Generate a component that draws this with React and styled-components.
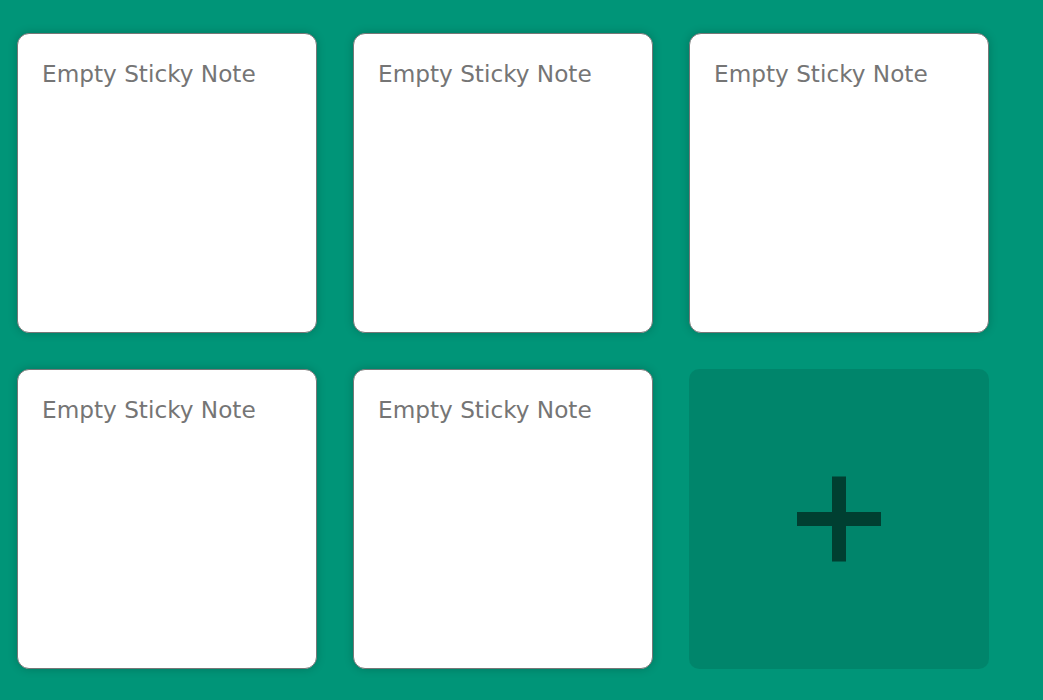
import React, { useState } from "react";
import styled, { createGlobalStyle } from "styled-components";

const GlobalStyle = createGlobalStyle`
  html, body {
    margin: 0;
    padding: 0;
    background: #009578;
  }
`;

const Board = styled.div`
  display: grid;
  grid-template-columns: repeat(auto-fill, 300px);
  gap: 36px;
  padding: 33px 17px;
`;

const Note = styled.textarea`
  box-sizing: border-box;
  width: 300px;
  height: 300px;
  margin: 0;
  padding: 26px 24px 16px;
  border: 1px solid #777;
  border-radius: 12px;
  background: #fff;
  box-shadow: 0 0 10px rgba(0, 0, 0, 0.2);
  resize: none;
  outline: none;
  font-family: "DejaVu Sans", Verdana, sans-serif;
  font-size: 23.2px;
  color: #333;

  &::placeholder {
    color: #757575;
  }
`;

const AddButton = styled.button`
  position: relative;
  width: 300px;
  height: 300px;
  padding: 0;
  border: none;
  border-radius: 10px;
  background: rgba(0, 0, 0, 0.1);
  cursor: pointer;

  &::before,
  &::after {
    content: "";
    position: absolute;
    left: 50%;
    top: 50%;
    background: #003f31;
    transform: translate(-50%, -50%);
  }
  &::before {
    width: 84px;
    height: 14px;
  }
  &::after {
    width: 14px;
    height: 85px;
  }
`;

export default function App() {
  const [notes, setNotes] = useState(["", "", "", "", ""]);

  const handleChange = (i, value) => {
    setNotes(notes.map((n, j) => (j === i ? value : n)));
  };

  return (
    <>
      <GlobalStyle />
      <Board>
        {notes.map((text, i) => (
          <Note
            key={i}
            value={text}
            placeholder="Empty Sticky Note"
            onChange={(e) => handleChange(i, e.target.value)}
          />
        ))}
        <AddButton
          aria-label="Add note"
          onClick={() => setNotes([...notes, ""])}
        />
      </Board>
    </>
  );
}
